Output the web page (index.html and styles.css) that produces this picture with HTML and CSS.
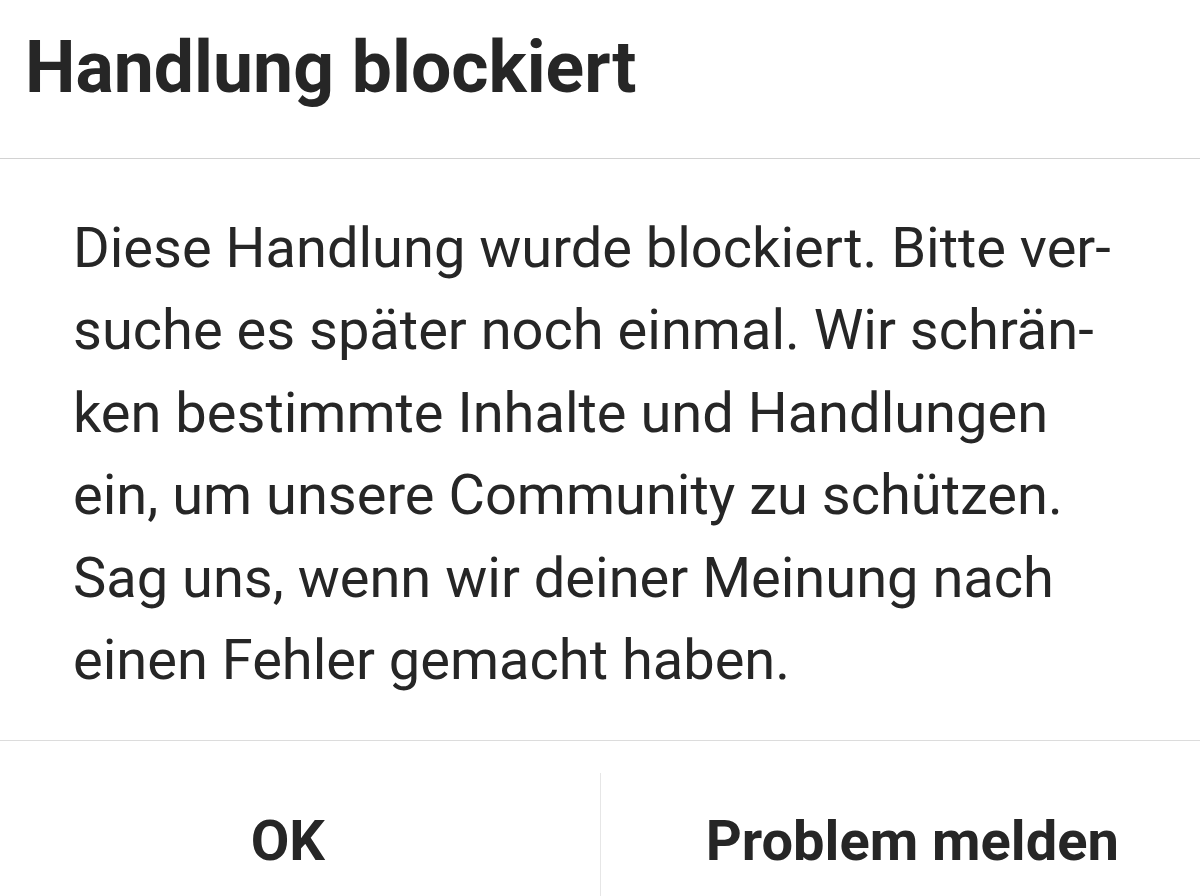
FILE: index.html
```html
<!DOCTYPE html>
<html>
<head>
  <title>Handlung blockiert</title>
  <link rel="stylesheet" href="styles.css">
</head>
<body>
  <div class="dialog">
    <div class="dialog-header">
      <h1>Handlung blockiert</h1>
    </div>
    <div class="dialog-body">
      <p>Diese Handlung wurde blockiert. Bitte ver-<br>suche es später noch einmal. Wir schrän-<br>ken bestimmte Inhalte und Handlungen<br>ein, um unsere Community zu schützen.<br>Sag uns, wenn wir deiner Meinung nach<br>einen Fehler gemacht haben.</p>
    </div>
    <div class="dialog-actions">
      <button class="action action-left">OK</button>
      <button class="action action-right">Problem melden</button>
    </div>
  </div>
</body>
</html>
```

FILE: styles.css
```css
body {
  margin: 0;
  padding: 0;
  background-color: #fff;
  font-family: Roboto, "Noto Sans", Arial, sans-serif;
  color: #262626;
}

.dialog {
  width: 1200px;
  height: 896px;
  overflow: hidden;
}

.dialog-header {
  height: 159px;
  border-bottom: 1px solid #d2d2d2;
  padding-left: 25px;
  box-sizing: border-box;
}

.dialog-header h1 {
  margin: 0;
  padding-top: 25px;
  font-size: 71.5px;
  font-weight: 700;
  line-height: 86px;
}

.dialog-body {
  height: 582px;
  border-bottom: 1px solid #dcdcdc;
  padding-left: 73px;
  box-sizing: border-box;
}

.dialog-body p {
  margin: 0;
  padding-top: 48px;
  font-size: 56px;
  line-height: 82.4px;
}

.dialog-actions {
  display: flex;
  padding-top: 32px;
}

.action {
  flex: 1;
  height: 123px;
  border: none;
  background: none;
  padding: 12px 0 0 0;
  font-family: inherit;
  font-size: 56px;
  font-weight: 700;
  color: #262626;
  cursor: pointer;
}

.action-left {
  padding-right: 24px;
}

.action-right {
  padding-left: 24px;
  border-left: 1px solid #e6e6e6;
}
```
